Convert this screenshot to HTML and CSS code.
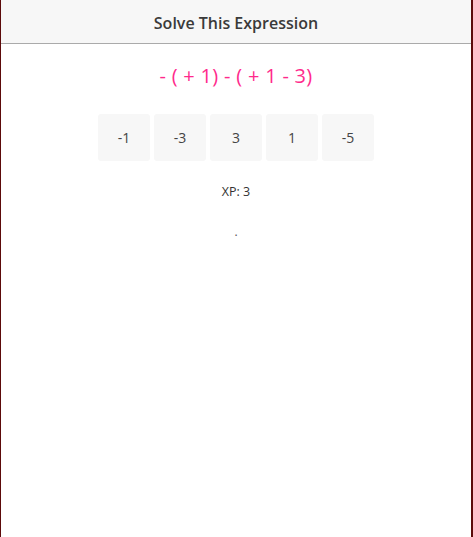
FILE: index.html
```html
<!DOCTYPE html>
<html>
<head>
<meta charset="utf-8">
<link rel="stylesheet" href="styles.css">
</head>
<body>
<div class="frame">
  <header class="header">Solve This Expression</header>
  <div class="expr">- ( + 1) - ( + 1 - 3)</div>
  <div class="choices">
    <button class="choice">-1</button>
    <button class="choice">-3</button>
    <button class="choice">3</button>
    <button class="choice">1</button>
    <button class="choice">-5</button>
  </div>
  <div class="xp">XP: 3</div>
  <div class="dot">.</div>
</div>
</body>
</html>
```
FILE: styles.css
```css
html, body {
  margin: 0;
  padding: 0;
  height: 100%;
  background: #fff;
}
.frame {
  box-sizing: border-box;
  width: 473px;
  height: 537px;
  border-left: 1px solid #5c0a0a;
  border-right: 2px solid #5c0a0a;
  font-family: "Open Sans", "Noto Sans", sans-serif;
  display: flex;
  flex-direction: column;
  align-items: center;
}
.header {
  box-sizing: border-box;
  align-self: stretch;
  height: 44px;
  background: #f7f7f7;
  border-bottom: 1px solid #aaaaaa;
  display: flex;
  align-items: center;
  justify-content: center;
  font-size: 16px;
  font-weight: 600;
  color: #3a3a3a;
  padding-top: 2px;
}
.expr {
  margin-top: 18px;
  font-size: 20px;
  letter-spacing: 0.3px;
  color: #ff2a8c;
  line-height: 28px;
}
.choices {
  margin-top: 24px;
  display: flex;
  gap: 4px;
}
.choice {
  width: 52px;
  height: 47px;
  border: none;
  border-radius: 3px;
  background: #f7f7f7;
  font-family: "Open Sans", "Noto Sans", sans-serif;
  font-size: 14px;
  color: #444;
  padding: 0;
}
.xp {
  margin-top: 23px;
  font-size: 12.5px;
  color: #333;
  line-height: 16px;
}
.dot {
  margin-top: 24px;
  font-size: 12px;
  color: #555;
  line-height: 16px;
}
```
